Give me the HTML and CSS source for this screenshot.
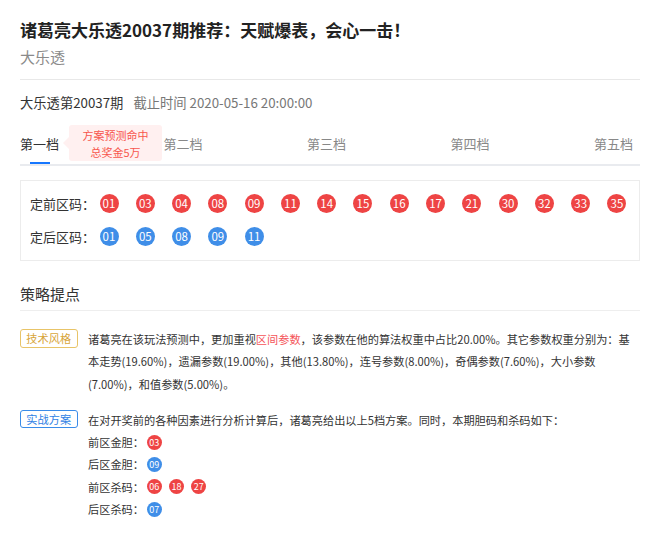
FILE: index.html
```html
<!DOCTYPE html>
<html lang="zh-CN">
<head>
<meta charset="utf-8">
<title>诸葛亮大乐透20037期推荐</title>
<link rel="stylesheet" href="styles.css">
</head>
<body>
<div class="page">
  <h1 class="title">诸葛亮大乐透20037期推荐：天赋爆表，会心一击！</h1>
  <div class="subtitle">大乐透</div>
  <div class="divider"></div>
  <div class="info"><span class="issue">大乐透第20037期</span><span class="deadline">截止时间 2020-05-16 20:00:00</span></div>

  <div class="tabs">
    <div class="tab active">第一档<span class="tab-bar"></span></div>
    <div class="tab">第二档</div>
    <div class="tab">第三档</div>
    <div class="tab">第四档</div>
    <div class="tab">第五档</div>
    <div class="tip">方案预测命中<br>总奖金5万</div>
  </div>

  <div class="ballbox">
    <div class="ballrow">
      <span class="label">定前区码：</span>
      <span class="ball red">01</span><span class="ball red">03</span><span class="ball red">04</span><span class="ball red">08</span><span class="ball red">09</span><span class="ball red">11</span><span class="ball red">14</span><span class="ball red">15</span><span class="ball red">16</span><span class="ball red">17</span><span class="ball red">21</span><span class="ball red">30</span><span class="ball red">32</span><span class="ball red">33</span><span class="ball red">35</span>
    </div>
    <div class="ballrow">
      <span class="label">定后区码：</span>
      <span class="ball blue">01</span><span class="ball blue">05</span><span class="ball blue">08</span><span class="ball blue">09</span><span class="ball blue">11</span>
    </div>
  </div>

  <h2 class="section">策略提点</h2>

  <div class="item first">
    <span class="tag gold">技术风格</span>
    <div class="text">诸葛亮在该玩法预测中，更加重视<span class="hl">区间参数</span>，该参数在他的算法权重中占比20.00%。其它参数权重分别为：基本走势(19.60%)，遗漏参数(19.00%)，其他(13.80%)，连号参数(8.00%)，奇偶参数(7.60%)，大小参数(7.00%)，和值参数(5.00%)。</div>
  </div>

  <div class="item second">
    <span class="tag blue">实战方案</span>
    <div class="text">
      <div>在对开奖前的各种因素进行分析计算后，诸葛亮给出以上5档方案。同时，本期胆码和杀码如下：</div>
      <div class="line">前区金胆：<span class="sball red">03</span></div>
      <div class="line">后区金胆：<span class="sball blue">09</span></div>
      <div class="line">前区杀码：<span class="sball red">06</span><span class="sball red">18</span><span class="sball red">27</span></div>
      <div class="line">后区杀码：<span class="sball blue">07</span></div>
    </div>
  </div>
</div>
</body>
</html>
```

FILE: styles.css
```css
html, body {
  margin: 0;
  padding: 0;
  background: #fff;
}
body {
  font-family: "Noto Sans CJK SC", "Noto Sans", sans-serif;
  color: #333;
}
.page {
  padding: 18px 10px 0 20px;
}
.title {
  margin: 0;
  font-size: 17px;
  line-height: 24px;
  font-weight: bold;
  color: #222;
}
.subtitle {
  margin-top: 5px;
  font-size: 15px;
  line-height: 20px;
  color: #8a8a8a;
}
.divider {
  margin-top: 12px;
  height: 1px;
  background: #e8e8e8;
}
.info {
  margin-top: 13px;
  font-size: 13.3px;
  line-height: 20px;
}
.issue {
  color: #333;
}
.deadline {
  margin-left: 10px;
  color: #777;
}
.tabs {
  position: relative;
  margin-top: 10px;
  display: flex;
  justify-content: space-between;
  padding-right: 7px;
  border-bottom: 2px solid #e9ebef;
}
.tab {
  position: relative;
  font-size: 13px;
  line-height: 41px;
  height: 41px;
  color: #888;
}
.tab.active {
  color: #303133;
}
.tab-bar {
  position: absolute;
  left: 10px;
  bottom: 0;
  width: 20px;
  height: 2px;
  background: #1677ff;
}
.tip {
  position: absolute;
  left: 49px;
  top: 2px;
  width: 93px;
  height: 36px;
  box-sizing: border-box;
  padding-top: 2px;
  background: #fff0f0;
  border-radius: 3px;
  color: #f7564d;
  font-size: 11px;
  line-height: 16.5px;
  text-align: center;
}
.tip::before {
  content: "";
  position: absolute;
  left: -6px;
  top: 12px;
  border-style: solid;
  border-width: 6px 6px 6px 0;
  border-color: transparent #fff0f0 transparent transparent;
}
.ballbox {
  margin-top: 14px;
  border: 1px solid #ececec;
  padding: 12px 0 14px 9px;
  display: flex;
  flex-direction: column;
  gap: 13px;
}
.ballrow {
  display: flex;
  align-items: center;
  height: 20px;
}
.label {
  flex: none;
  width: 69.5px;
  font-size: 13px;
  color: #333;
}
.ball {
  flex: none;
  width: 19px;
  height: 19px;
  border-radius: 50%;
  margin-right: 17.29px;
  color: #fff;
  font-size: 11.5px;
  line-height: 19px;
  text-align: center;
}
.red {
  background: #ee4444;
}
.blue {
  background: #3f8ee8;
}
.section {
  margin: 22px 0 0;
  font-size: 15px;
  font-weight: normal;
  line-height: 22px;
  padding-bottom: 5px;
  border-bottom: 1px solid #eeeeee;
  color: #333;
}
.item {
  display: flex;
  align-items: flex-start;
  font-size: 11.2px;
  line-height: 22.3px;
}
.item.first {
  margin-top: 17px;
}
.item.second {
  margin-top: 14px;
}
.tag {
  flex: none;
  box-sizing: border-box;
  width: 57.5px;
  height: 18.5px;
  margin-top: 1px;
  border: 1px solid;
  border-radius: 3px;
  font-size: 11.2px;
  line-height: 16.5px;
  text-align: center;
  background: #fff;
}
.tag.gold {
  color: #d8a53a;
  border-color: #e8c468;
}
.tag.blue {
  color: #2f7fe4;
  border-color: #3a8ce9;
}
.text {
  margin-left: 10.5px;
  width: 545px;
  color: #333;
}
.hl {
  color: #f5555a;
}
.line {
  display: flex;
  align-items: center;
  height: 22.3px;
}
.sball {
  flex: none;
  width: 15px;
  height: 15px;
  border-radius: 50%;
  margin-right: 7.3px;
  color: #fff;
  font-size: 9px;
  line-height: 15px;
  text-align: center;
}
.line .sball:first-child {
  margin-left: 2.7px;
}
```
